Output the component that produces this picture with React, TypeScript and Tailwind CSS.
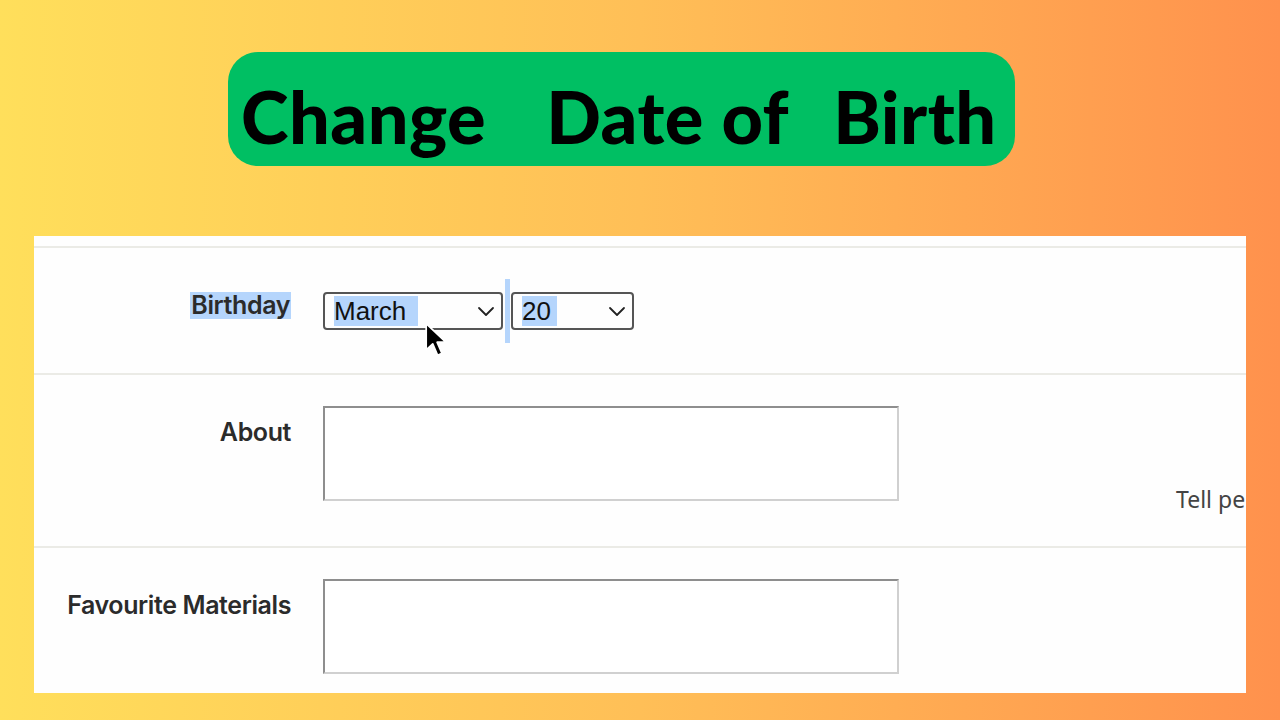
import React from "react";

function Chevron() {
  return (
    <svg width="18" height="12" viewBox="0 0 18 12" fill="none">
      <path d="M2 3 L9 10 L16 3" stroke="#222" strokeWidth="1.8" strokeLinecap="round" strokeLinejoin="round" />
    </svg>
  );
}

function Cursor() {
  return (
    <svg width="24" height="38" viewBox="0 0 22 34" className="absolute left-[424px] top-[321px]">
      <path d="M2 2 L2 26 L8 20.5 L12.5 31 L16.5 29.3 L12 19 L20 19 Z" fill="#000" stroke="#fff" strokeWidth="1.6" strokeLinejoin="round" />
    </svg>
  );
}

export default function App() {
  const label = "text-[25px] font-semibold text-[#2b2b2b] tracking-[-0.4px]";
  const labelFont = { fontFamily: "Inter, 'Noto Sans', sans-serif" } as React.CSSProperties;
  return (
    <div className="relative w-[1280px] h-[720px] overflow-hidden bg-linear-to-r from-[#ffdf5b] via-[#ffbf57] to-[#ff914d]">
      <div className="pt-[52px] pl-[228px]">
        <div className="w-[787px] h-[114px] rounded-[30px] bg-[#00bf63] flex items-center pl-[13px]">
          <div
            className="flex items-baseline text-[72px] font-black text-black leading-none tracking-[0.5px] pt-[14px]"
            style={{ fontFamily: "Lato, 'Noto Sans', sans-serif" }}
          >
            <span>Change</span>
            <span className="ml-[60px]">Date of</span>
            <span className="ml-[44px]">Birth</span>
          </div>
        </div>
      </div>

      <div className="mt-[70px] ml-[34px] w-[1212px] h-[457px] bg-[#fefefe] overflow-hidden">
        <div className="h-[10px]" />
        <div className="h-[2px] bg-[#ebebe6]" />
        {/* Birthday row */}
        <div className="h-[127px] border-b-2 border-[#ebebe6] flex">
          <div className="w-[257px] flex justify-end pt-[44px]">
            <span className={`${label} bg-[#b5d5fc] px-[1px] h-[27px] leading-[27px]`} style={labelFont}>Birthday</span>
          </div>
          <div className="ml-[32px] pt-[44px] flex items-start">
            <div className="w-[180px] h-[38px] border-2 border-[#555] rounded-[4px] flex items-center justify-between pl-[9px] pr-[6px]">
              <span className="text-[26px] text-[#111] bg-[#b5d5fc] pr-[12px] leading-[30px]" style={{ fontFamily: "'Liberation Sans', Arial, sans-serif" }}>March</span>
              <Chevron />
            </div>
            <div className="w-[8px] h-[64px] -mt-[13px] flex justify-center">
              <div className="w-[5px] h-full bg-[#b5d5fc]" />
            </div>
            <div className="w-[123px] h-[38px] border-2 border-[#555] rounded-[4px] flex items-center justify-between pl-[9px] pr-[6px]">
              <span className="text-[26px] text-[#111] bg-[#b5d5fc] pr-[6px] leading-[30px]" style={{ fontFamily: "'Liberation Sans', Arial, sans-serif" }}>20</span>
              <Chevron />
            </div>
          </div>
        </div>
        {/* About row */}
        <div className="h-[173px] border-b-2 border-[#ebebe6] flex relative">
          <div className="w-[257px] flex justify-end pt-[44px]">
            <span className={`${label} leading-[26px]`} style={labelFont}>About</span>
          </div>
          <div className="ml-[32px] pt-[31px]">
            <div className="w-[576px] h-[95px] border-2 border-t-[#8e8e8e] border-l-[#8e8e8e] border-r-[#d0d0d0] border-b-[#d0d0d0] bg-white" />
          </div>
          <span
            className="absolute left-[1142px] top-[107px] text-[23px] text-[#444] whitespace-nowrap"
            style={{ fontFamily: "'Noto Sans', Inter, sans-serif" }}
          >
            Tell pe
          </span>
        </div>
        {/* Favourite row */}
        <div className="flex">
          <div className="w-[257px] flex justify-end pt-[44px]">
            <span className={`${label} leading-[26px] whitespace-nowrap`} style={labelFont}>Favourite Materials</span>
          </div>
          <div className="ml-[32px] pt-[31px]">
            <div className="w-[576px] h-[95px] border-2 border-t-[#8e8e8e] border-l-[#8e8e8e] border-r-[#d0d0d0] border-b-[#d0d0d0] bg-white" />
          </div>
        </div>
      </div>
      <Cursor />
    </div>
  );
}
